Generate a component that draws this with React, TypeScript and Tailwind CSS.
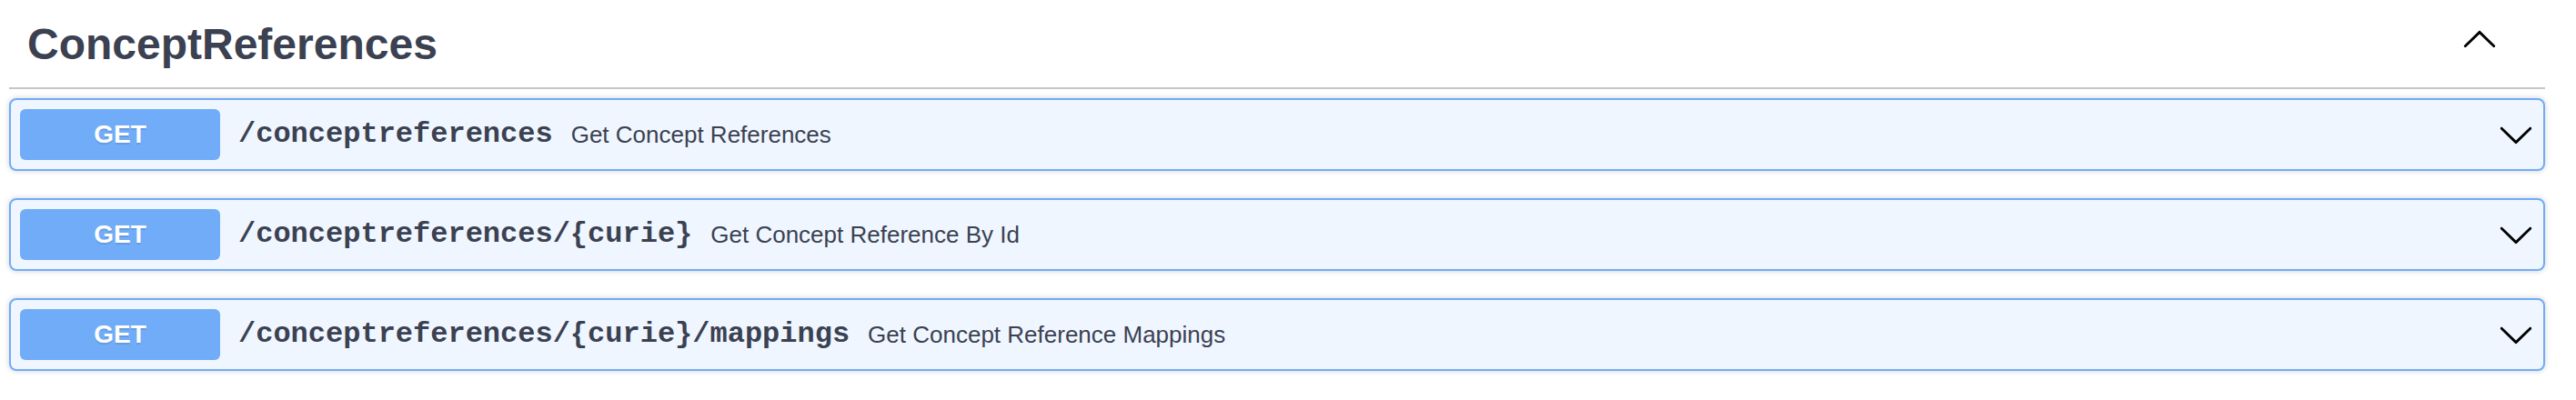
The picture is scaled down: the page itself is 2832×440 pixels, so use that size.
const operations = [
  { path: "/conceptreferences", summary: "Get Concept References" },
  { path: "/conceptreferences/{curie}", summary: "Get Concept Reference By Id" },
  { path: "/conceptreferences/{curie}/mappings", summary: "Get Concept Reference Mappings" },
]

const Arrow = ({ up = false }: { up?: boolean }) => (
  <svg viewBox="0 0 20 20" className={up ? "w-10 h-10 shrink-0 rotate-180" : "w-10 h-10 shrink-0"} fill="#000">
    <path d="M17.418 6.109c.272-.268.709-.268.979 0s.271.701 0 .969l-7.908 7.83c-.27.268-.707.268-.979 0l-7.908-7.83c-.27-.268-.27-.701 0-.969.271-.268.709-.268.979 0L10 13.25l7.418-7.141z" />
  </svg>
)

const App = () => {
  return (
    <main className="w-full h-[440px] bg-white font-['Liberation_Sans',Arial,sans-serif] text-[#3b4151]">
      <section className="ml-[10px] w-[2788px]">
        {/* Tag header */}
        <div className="flex items-start justify-between border-b-2 border-[#c4c6cb] pl-[20px] pr-[52px]">
          <h3 className="pt-[21px] pb-[20px] text-[48px] leading-[55px] font-bold">ConceptReferences</h3>
          <div className="mt-[24px]">
            <Arrow up />
          </div>
        </div>

        {/* Operations */}
        <div className="mt-[10px] flex flex-col gap-[30px]">
          {operations.map((op) => (
            <div
              key={op.path}
              className="flex items-center p-[10px] rounded-lg border-2 border-[#70acf8] bg-[#eff6ff] shadow-[0_0_6px_rgba(0,0,0,0.19)]"
            >
              <span className="w-[220px] h-[56px] shrink-0 flex items-center justify-center rounded-[6px] bg-[#70acf8] text-white text-[28px] font-bold [text-shadow:0_2px_0_rgba(0,0,0,0.1)]">
                GET
              </span>
              <span className="px-[20px] font-['Liberation_Mono','Courier_New',monospace] text-[32px] font-bold whitespace-nowrap">
                {op.path}
              </span>
              <span className="flex-1 text-[26px] whitespace-nowrap">{op.summary}</span>
              <Arrow />
            </div>
          ))}
        </div>
      </section>
    </main>
  )
}

export default App
